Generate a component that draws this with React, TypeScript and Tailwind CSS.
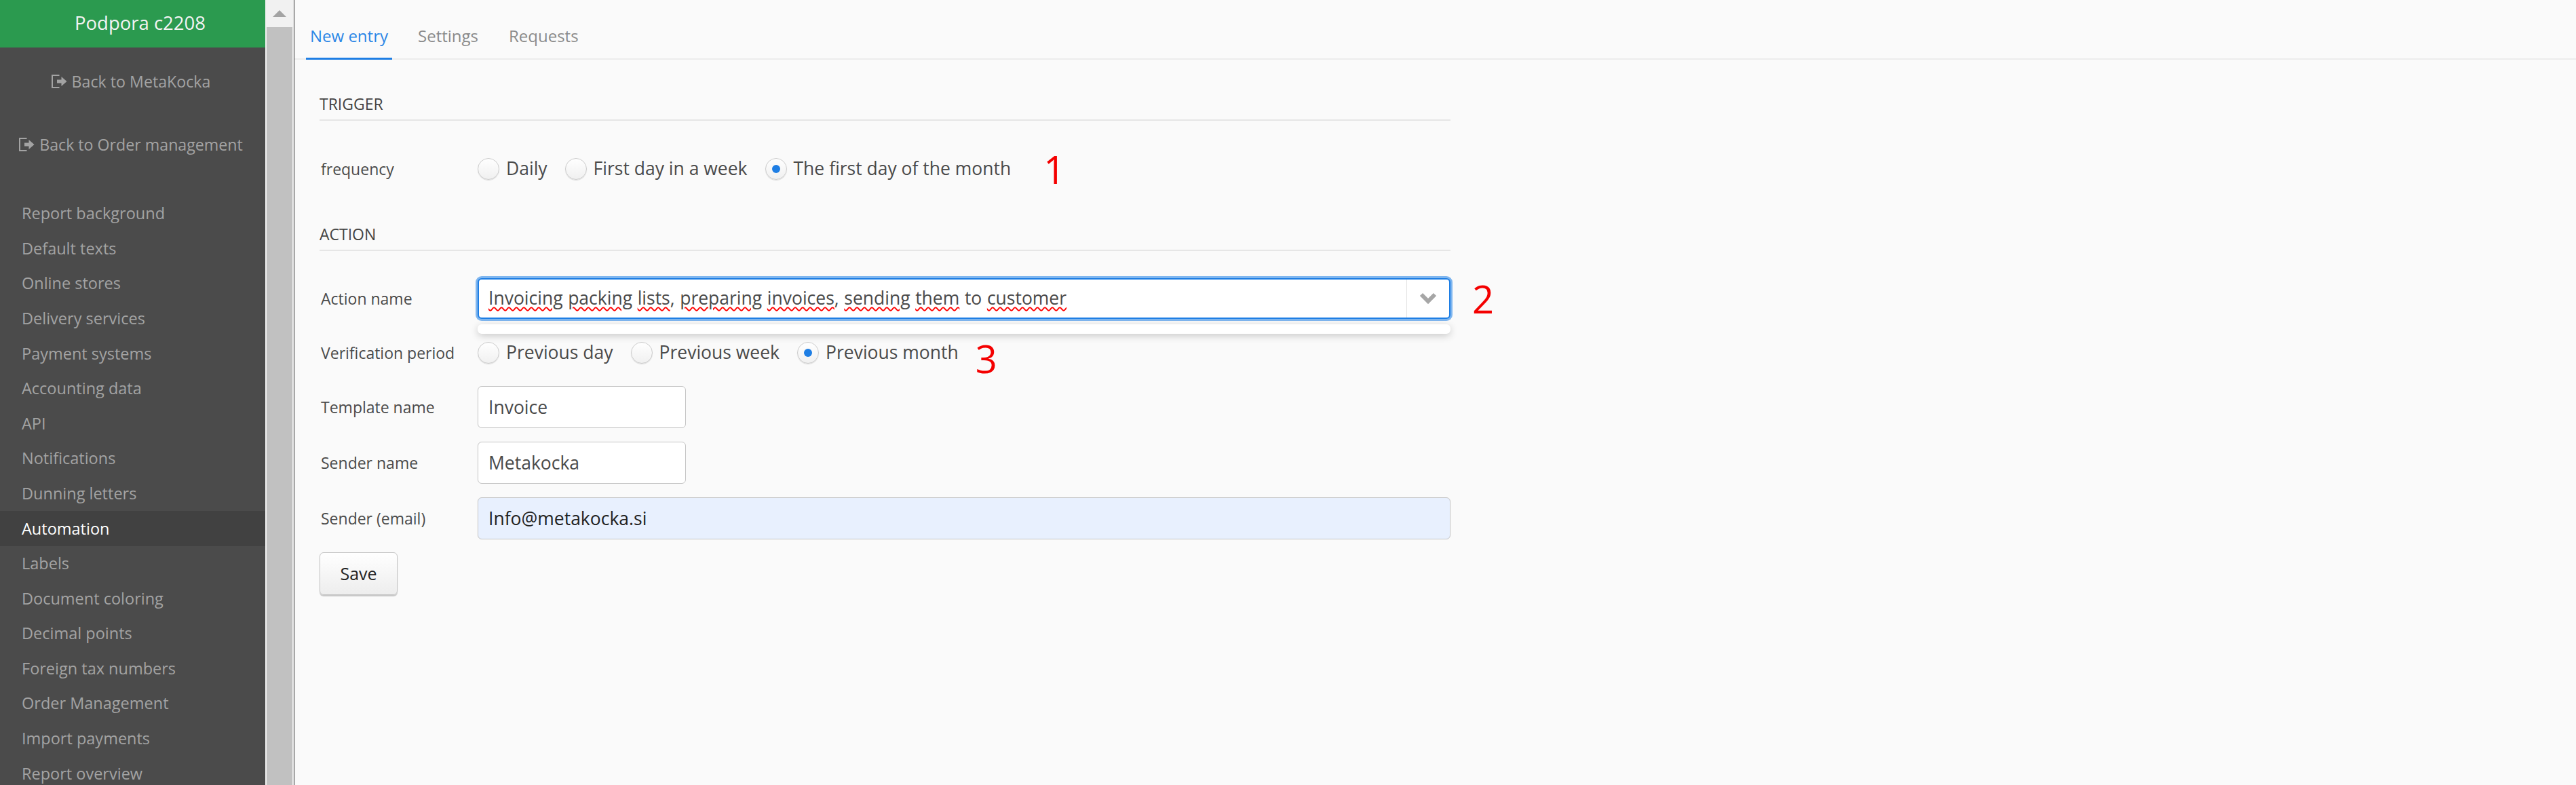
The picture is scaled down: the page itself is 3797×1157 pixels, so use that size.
const navItems = [
  'Report background',
  'Default texts',
  'Online stores',
  'Delivery services',
  'Payment systems',
  'Accounting data',
  'API',
  'Notifications',
  'Dunning letters',
  'Automation',
  'Labels',
  'Document coloring',
  'Decimal points',
  'Foreign tax numbers',
  'Order Management',
  'Import payments',
  'Report overview',
];

function LogOutIcon() {
  return (
    <svg width="24" height="24" viewBox="0 0 24 24" className="mr-[7px] shrink-0">
      <path d="M12.5 3H2v18h10.5" fill="none" stroke="#a3a3a3" strokeWidth="2" />
      <path d="M9 9.5h6.5V5l8 7-8 7v-4.5H9z" fill="#a3a3a3" />
    </svg>
  );
}

function BackLink({ label, className }: { label: string; className: string }) {
  return (
    <div className={`flex items-center justify-center pr-[6px] text-[23.2px] text-[#a3a3a3] ${className}`}>
      <LogOutIcon />
      {label}
    </div>
  );
}

function Radio({ label, checked = false }: { label: string; checked?: boolean }) {
  return (
    <div className="flex items-center gap-[10px] text-[26.5px] text-[#4a4a4a]">
      <span className="flex size-[32px] items-center justify-center rounded-full border border-[#cccccc] bg-gradient-to-b from-white to-[#f0f0f0] shadow-[0_1px_1px_rgba(0,0,0,0.12)]">
        {checked && <span className="size-[12px] rounded-full bg-[#1e7ee4]" />}
      </span>
      {label}
    </div>
  );
}

function Mark({ value, className }: { value: string; className: string }) {
  return <span className={`text-[56px] leading-none text-[#f40000] ${className}`}>{value}</span>;
}

function Typo({ children }: { children: string }) {
  return <span className="underline decoration-[#ff0000] decoration-wavy decoration-2 underline-offset-[3px]">{children}</span>;
}

function Row({ label, children, className = '' }: { label: string; children: React.ReactNode; className?: string }) {
  return (
    <div className={`flex items-center ${className}`}>
      <label className="w-[233px] shrink-0 pl-[2px] text-[23px] text-[#4a4a4a]">{label}</label>
      {children}
    </div>
  );
}

function Heading({ children }: { children: string }) {
  return <h2 className="h-[41px] border-b-2 border-[#e6e6e6] text-[23px] leading-[32px] text-[#444444]">{children}</h2>;
}

const inputClass =
  'h-[62px] rounded-[6px] border border-[#c4c4c4] px-[15px] text-[26.5px] text-[#4a4a4a] outline-none';

export default function App() {
  return (
    <div className="flex h-screen overflow-hidden bg-[#fafafa] font-['Open_Sans',sans-serif]">
      <aside className="w-[391px] shrink-0 overflow-hidden bg-[#4b4b4b]">
        <div className="flex h-[70px] items-center justify-center bg-[#2b9a4f] pb-[2px] pl-[22px] text-[27.5px] text-[#f4f4f4]">
          Podpora c2208
        </div>
        <BackLink label="Back to MetaKocka" className="mt-[30px] h-[40px]" />
        <BackLink label="Back to Order management" className="mt-[53px] h-[40px]" />
        <nav className="mt-[56px]">
          {navItems.map((item) => (
            <div
              key={item}
              className={`flex h-[51.6px] items-center pl-[32px] text-[23.5px] ${
                item === 'Automation' ? 'bg-[#414141] text-white' : 'text-[#a3a3a3]'
              }`}
            >
              {item}
            </div>
          ))}
        </nav>
      </aside>

      <div className="flex w-[43px] shrink-0 flex-col border-r border-[#333333] bg-[#f1f1f1] pr-[2px] pl-[2px]">
        <div className="flex h-[40px] shrink-0 justify-center pt-[15px]">
          <svg width="20" height="10" viewBox="0 0 20 10">
            <path d="M10 0l10 10H0z" fill="#a3a3a3" />
          </svg>
        </div>
        <div className="flex-1 bg-[#c1c1c1]" />
      </div>

      <main className="min-w-0 flex-1">
        <div className="flex h-[88px] items-end border-b-2 border-[#ececec] pl-[17px] text-[24px] text-[#8a8a8a]">
          <div className="-mb-[2px] flex h-[60px] w-[127px] items-start justify-center border-b-[3px] border-[#1e7ee4] pt-[7px] text-[#2b86e6]">
            New entry
          </div>
          <div className="ml-[38px] h-[58px] pt-[7px]">Settings</div>
          <div className="ml-[45px] h-[58px] pt-[7px]">Requests</div>
        </div>

        <div className="w-[1704px] pt-[49px] pl-[37px]">
          <Heading>TRIGGER</Heading>
          <Row label="frequency" className="mt-[43px]">
            <div className="flex items-center gap-[26px]">
              <Radio label="Daily" />
              <Radio label="First day in a week" />
              <Radio label="The first day of the month" checked />
            </div>
            <Mark value="1" className="ml-[48px]" />
          </Row>

          <div className="mt-[52px]">
            <Heading>ACTION</Heading>
          </div>

          <Row label="Action name" className="mt-[40px]">
            <div className="relative flex-1">
              <div className="flex h-[60px] items-center rounded-[6px] border-2 border-[#1e7ee4] bg-white text-[26.5px] text-[#4a4a4a] shadow-[0_0_0_3px_#7fb6ef]">
                <div className="flex flex-1 gap-[7.6px] pl-[14px]">
                  <Typo>Invoicing</Typo>
                  <Typo>packing</Typo>
                  <span>
                    <Typo>lists</Typo>,
                  </span>
                  <Typo>preparing</Typo>
                  <span>
                    <Typo>invoices</Typo>,
                  </span>
                  <Typo>sending</Typo>
                  <Typo>them</Typo>
                  <span>to</span>
                  <Typo>customer</Typo>
                </div>
                <div className="flex h-full w-[63px] items-center justify-center border-l border-[#e2e2e2]">
                  <svg width="26" height="18" viewBox="0 0 26 18">
                    <path d="M3 3l10 10L23 3" fill="none" stroke="#a6a6a6" strokeWidth="6" />
                  </svg>
                </div>
              </div>
              <div className="absolute top-[68px] right-0 left-0 h-[14px] rounded-[6px] bg-white shadow-[0_3px_12px_rgba(0,0,0,0.2)]" />
              <Mark value="2" className="absolute top-[2px] -right-[64px]" />
            </div>
          </Row>

          <Row label="Verification period" className="mt-[22px]">
            <div className="flex items-center gap-[26px]">
              <Radio label="Previous day" />
              <Radio label="Previous week" />
              <Radio label="Previous month" checked />
            </div>
            <Mark value="3" className="ml-[25px] translate-y-[8px]" />
          </Row>

          <Row label="Template name" className="mt-[21px]">
            <input readOnly value="Invoice" className={`w-[307px] bg-white ${inputClass}`} />
          </Row>
          <Row label="Sender name" className="mt-[20px]">
            <input readOnly value="Metakocka" className={`w-[307px] bg-white ${inputClass}`} />
          </Row>
          <Row label="Sender (email)" className="mt-[20px]">
            <input readOnly value="Info@metakocka.si" className={`flex-1 bg-[#e8f0fe] text-[#222222] ${inputClass}`} />
          </Row>

          <button className="mt-[19px] h-[63px] w-[115px] rounded-[6px] border border-[#c4c4c4] bg-gradient-to-b from-white to-[#ededed] text-[25px] text-[#222222] shadow-[0_2px_1px_rgba(0,0,0,0.2)]">
            Save
          </button>
        </div>
      </main>
    </div>
  );
}
